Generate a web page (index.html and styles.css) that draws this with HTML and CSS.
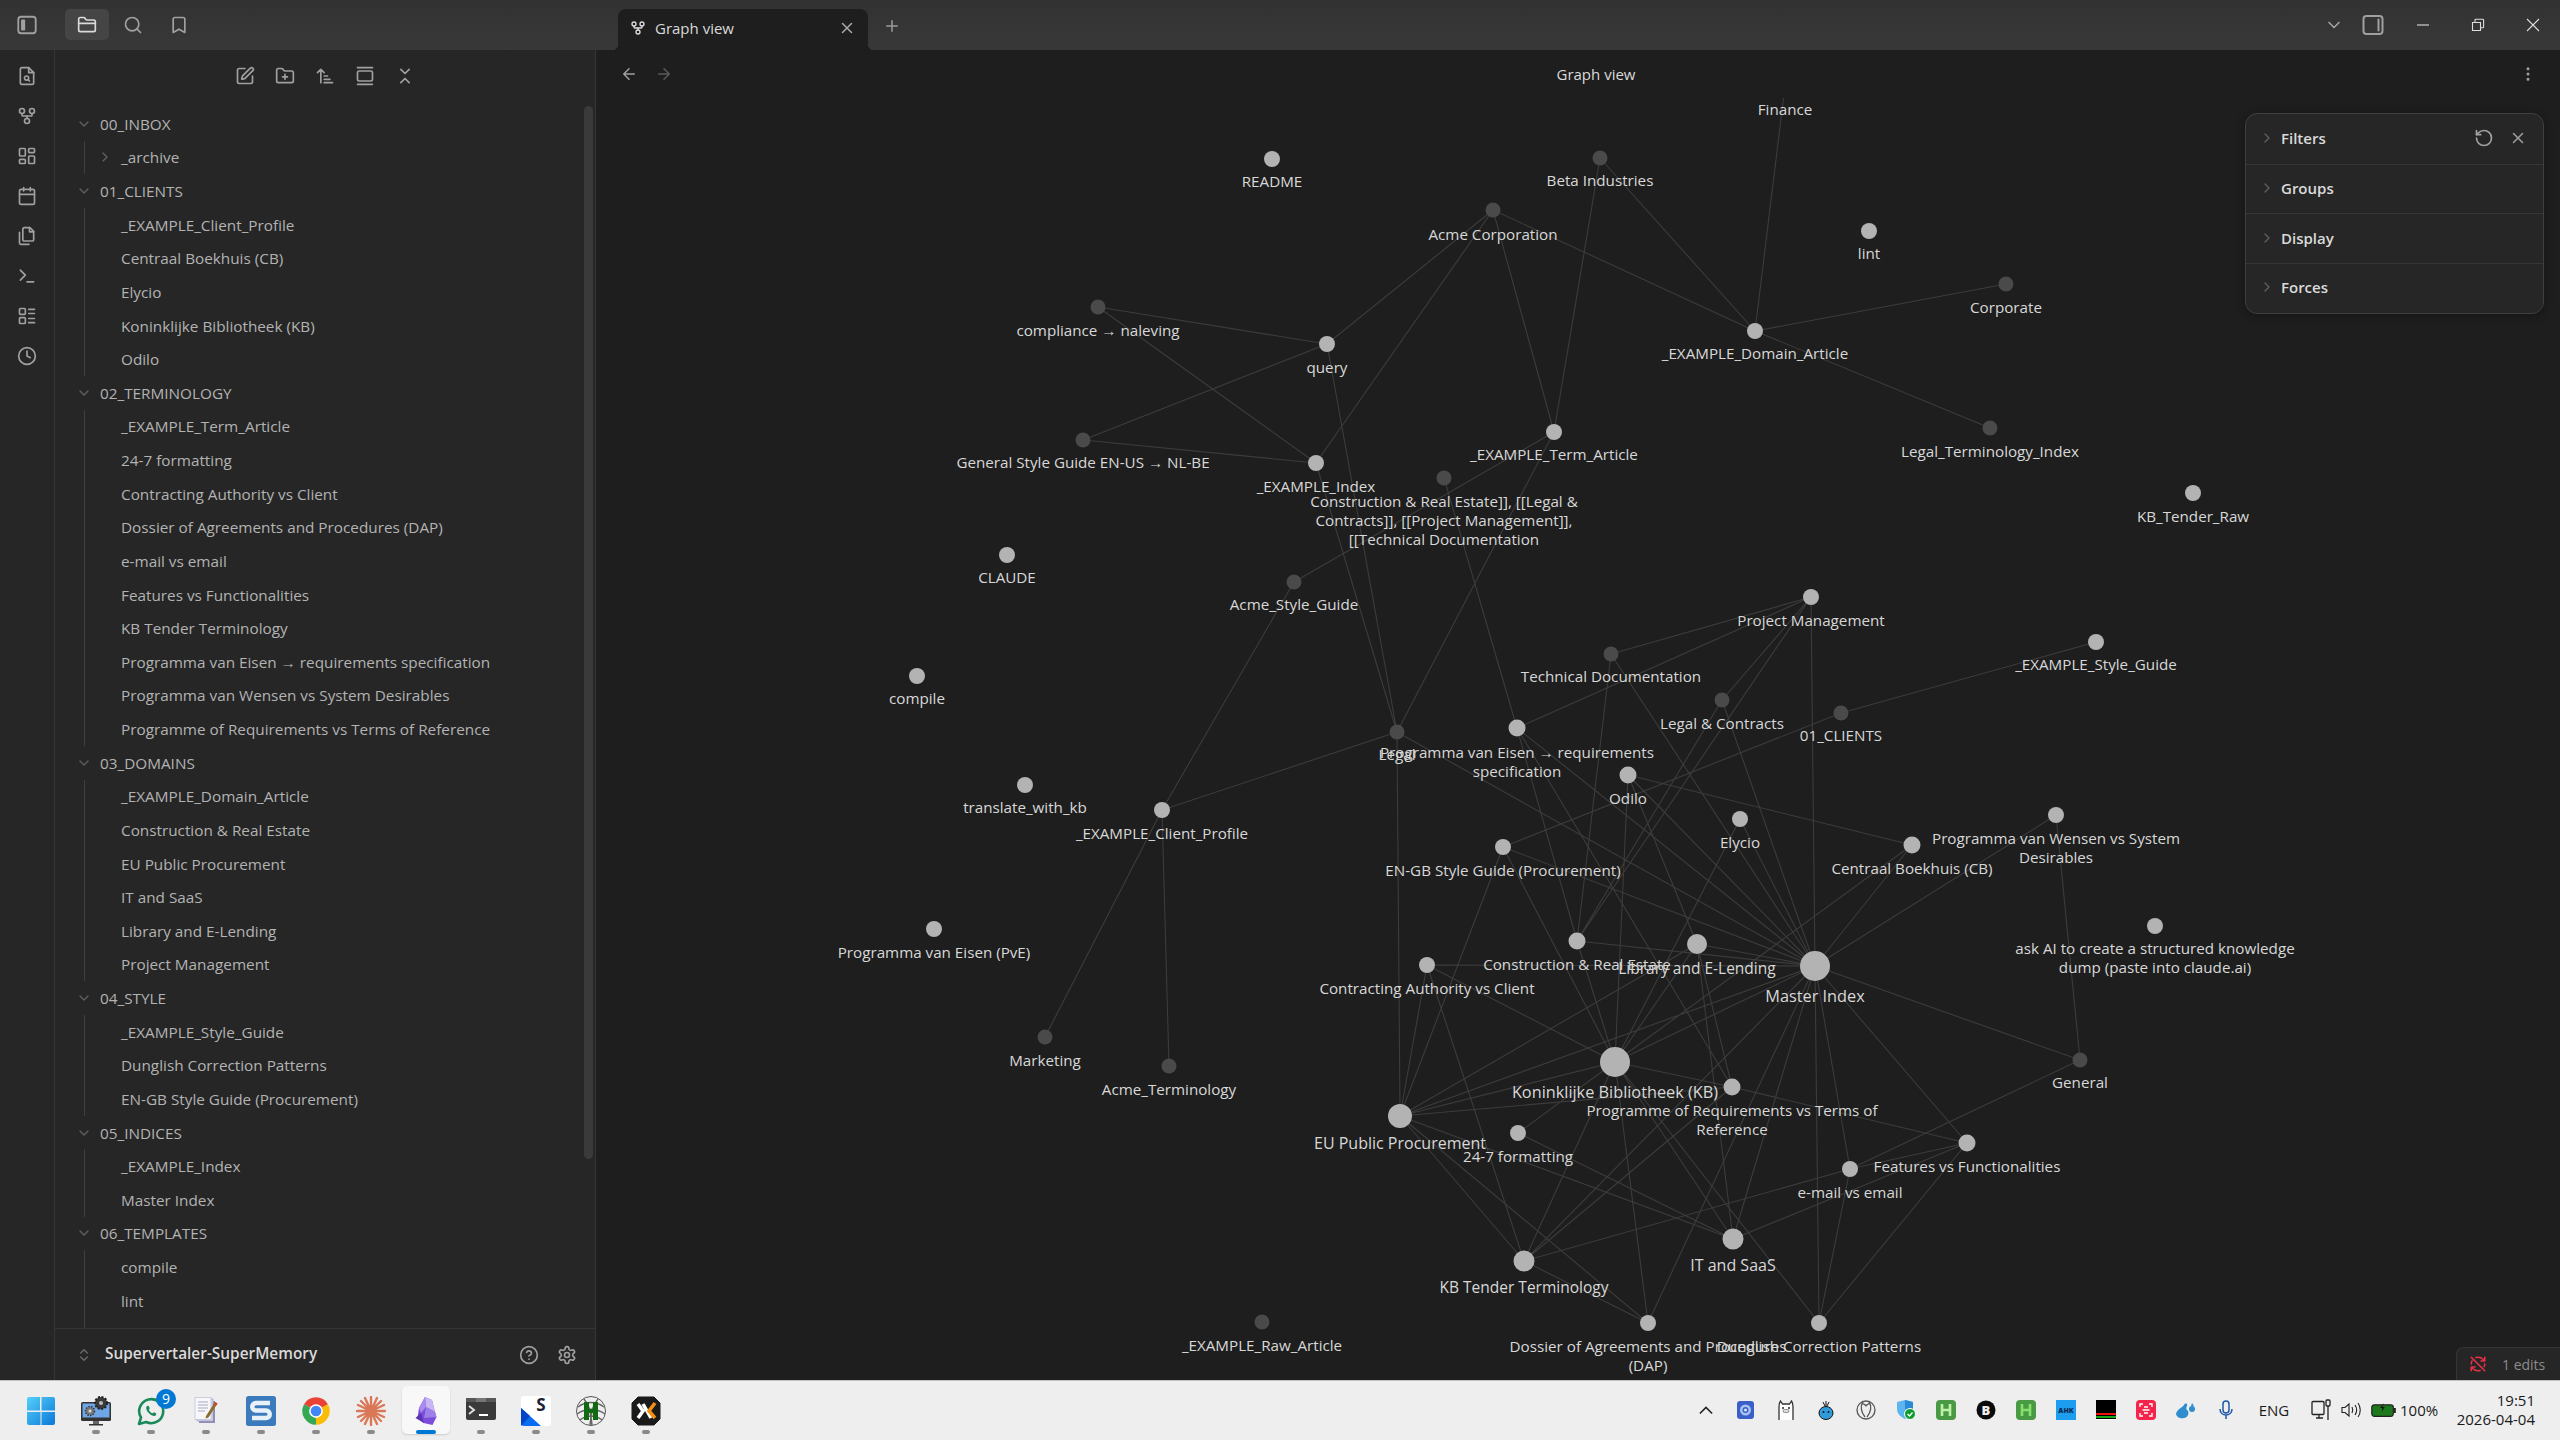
FILE: index.html
```html
<!DOCTYPE html>
<html lang="en">
<head>
<meta charset="utf-8">
<title>Graph view - Obsidian</title>
<link rel="stylesheet" href="styles.css">
</head>
<body>
<svg class="sprite" xmlns="http://www.w3.org/2000/svg">
  <symbol id="i-sidebar-left" viewBox="0 0 24 24"><rect x="2.5" y="3" width="19" height="18" rx="3"/><rect x="5.5" y="6" width="4.5" height="12" rx="1" class="fillc"/></symbol>
  <symbol id="i-sidebar-right" viewBox="0 0 24 24"><rect x="2.5" y="3" width="19" height="18" rx="3"/><path d="M17.5 6.5v11"/></symbol>
  <symbol id="i-folder" viewBox="0 0 24 24"><path d="M20 20a2 2 0 0 0 2-2V8a2 2 0 0 0-2-2h-7.9a2 2 0 0 1-1.69-.9L9.6 3.9A2 2 0 0 0 7.93 3H4a2 2 0 0 0-2 2v13a2 2 0 0 0 2 2Z"/><path d="M2 10h20"/></symbol>
  <symbol id="i-search" viewBox="0 0 24 24"><circle cx="11" cy="11" r="8"/><path d="m21 21-4.3-4.3"/></symbol>
  <symbol id="i-bookmark" viewBox="0 0 24 24"><path d="m19 21-7-4-7 4V5a2 2 0 0 1 2-2h10a2 2 0 0 1 2 2v16z"/></symbol>
  <symbol id="i-file-search" viewBox="0 0 24 24"><path d="M14 2H6a2 2 0 0 0-2 2v16a2 2 0 0 0 2 2h12a2 2 0 0 0 2-2V8z"/><path d="M14 2v6h6"/><circle cx="11.5" cy="14.5" r="2.5"/><path d="M13.3 16.3 15 18"/></symbol>
  <symbol id="i-graph" viewBox="0 0 24 24"><circle cx="12" cy="18" r="3"/><circle cx="6" cy="6" r="3"/><circle cx="18" cy="6" r="3"/><path d="M18 9v2c0 .6-.4 1-1 1H7c-.6 0-1-.4-1-1V9"/><path d="M12 12v3"/></symbol>
  <symbol id="i-dashboard" viewBox="0 0 24 24"><rect x="3" y="3" width="7" height="9" rx="1"/><rect x="14" y="3" width="7" height="5" rx="1"/><rect x="14" y="12" width="7" height="9" rx="1"/><rect x="3" y="16" width="7" height="5" rx="1"/></symbol>
  <symbol id="i-calendar" viewBox="0 0 24 24"><rect x="3" y="4" width="18" height="18" rx="2"/><path d="M16 2v4M8 2v4M3 10h18"/></symbol>
  <symbol id="i-files" viewBox="0 0 24 24"><path d="M15.5 2H8.6c-.4 0-.8.2-1.1.5-.3.3-.5.7-.5 1.1v12.8c0 .4.2.8.5 1.1.3.3.7.5 1.1.5h9.8c.4 0 .8-.2 1.1-.5.3-.3.5-.7.5-1.1V6.5L15.5 2z"/><path d="M3 7.6v12.8c0 .4.2.8.5 1.1.3.3.7.5 1.1.5h9.8"/><path d="M15 2v5h5"/></symbol>
  <symbol id="i-terminal" viewBox="0 0 24 24"><path d="m4 17 6-6-6-6"/><path d="M12 19h8"/></symbol>
  <symbol id="i-list" viewBox="0 0 24 24"><rect x="3" y="3" width="7" height="7" rx="1"/><rect x="3" y="14" width="7" height="7" rx="1"/><path d="M14 4h7M14 9h7M14 15h7M14 20h7"/></symbol>
  <symbol id="i-clock" viewBox="0 0 24 24"><circle cx="12" cy="12" r="10"/><path d="M12 6v6l4 2"/></symbol>
  <symbol id="i-edit" viewBox="0 0 24 24"><path d="M12 3H5a2 2 0 0 0-2 2v14a2 2 0 0 0 2 2h14a2 2 0 0 0 2-2v-7"/><path d="M18.375 2.625a1 1 0 0 1 3 3l-9.013 9.014a2 2 0 0 1-.853.505l-2.873.84a.5.5 0 0 1-.62-.62l.84-2.873a2 2 0 0 1 .506-.852z"/></symbol>
  <symbol id="i-folder-plus" viewBox="0 0 24 24"><path d="M12 10v6M9 13h6"/><path d="M20 20a2 2 0 0 0 2-2V8a2 2 0 0 0-2-2h-7.9a2 2 0 0 1-1.69-.9L9.6 3.9A2 2 0 0 0 7.93 3H4a2 2 0 0 0-2 2v13a2 2 0 0 0 2 2Z"/></symbol>
  <symbol id="i-sort" viewBox="0 0 24 24"><path d="m3 8 4-4 4 4M7 4v16M11 12h4M11 16h7M11 20h10"/></symbol>
  <symbol id="i-gallery" viewBox="0 0 24 24"><path d="M3 2h18M3 22h18"/><rect x="3" y="6" width="18" height="12" rx="2"/></symbol>
  <symbol id="i-collapse" viewBox="0 0 24 24"><path d="m7 20 5-5 5 5M7 4l5 5 5-5"/></symbol>
  <symbol id="i-down" viewBox="0 0 24 24"><path d="m6 9 6 6 6-6"/></symbol>
  <symbol id="i-right" viewBox="0 0 24 24"><path d="m9 18 6-6-6-6"/></symbol>
  <symbol id="i-updown" viewBox="0 0 24 24"><path d="m7 15 5 5 5-5M7 9l5-5 5 5"/></symbol>
  <symbol id="i-help" viewBox="0 0 24 24"><circle cx="12" cy="12" r="10"/><path d="M9.09 9a3 3 0 0 1 5.83 1c0 2-3 3-3 3M12 17h.01"/></symbol>
  <symbol id="i-gear" viewBox="0 0 24 24"><path d="M12.22 2h-.44a2 2 0 0 0-2 2v.18a2 2 0 0 1-1 1.73l-.43.25a2 2 0 0 1-2 0l-.15-.08a2 2 0 0 0-2.73.73l-.22.38a2 2 0 0 0 .73 2.73l.15.1a2 2 0 0 1 1 1.72v.51a2 2 0 0 1-1 1.74l-.15.09a2 2 0 0 0-.73 2.73l.22.38a2 2 0 0 0 2.73.73l.15-.08a2 2 0 0 1 2 0l.43.25a2 2 0 0 1 1 1.73V20a2 2 0 0 0 2 2h.44a2 2 0 0 0 2-2v-.18a2 2 0 0 1 1-1.73l.43-.25a2 2 0 0 1 2 0l.15.08a2 2 0 0 0 2.73-.73l.22-.39a2 2 0 0 0-.73-2.73l-.15-.08a2 2 0 0 1-1-1.74v-.5a2 2 0 0 1 1-1.74l.15-.09a2 2 0 0 0 .73-2.73l-.22-.38a2 2 0 0 0-2.73-.73l-.15.08a2 2 0 0 1-2 0l-.43-.25a2 2 0 0 1-1-1.73V4a2 2 0 0 0-2-2z"/><circle cx="12" cy="12" r="3"/></symbol>
  <symbol id="i-left-arrow" viewBox="0 0 24 24"><path d="m12 19-7-7 7-7M19 12H5"/></symbol>
  <symbol id="i-right-arrow" viewBox="0 0 24 24"><path d="M5 12h14M12 5l7 7-7 7"/></symbol>
  <symbol id="i-x" viewBox="0 0 24 24"><path d="M18 6 6 18M6 6l12 12"/></symbol>
  <symbol id="i-plus" viewBox="0 0 24 24"><path d="M5 12h14M12 5v14"/></symbol>
  <symbol id="i-more" viewBox="0 0 24 24"><circle cx="12" cy="12" r="1"/><circle cx="12" cy="5" r="1"/><circle cx="12" cy="19" r="1"/></symbol>
  <symbol id="i-reset" viewBox="0 0 24 24"><path d="M3 12a9 9 0 1 0 9-9 9.75 9.75 0 0 0-6.74 2.74L3 8"/><path d="M3 3v5h5"/></symbol>
  <symbol id="i-sync-off" viewBox="0 0 24 24"><path d="M3 3l18 18M21 8l-2.26-2.26A9.75 9.75 0 0 0 12 3c-1 0-1.97.15-2.88.43M21 3v5h-5M3 16l2.26 2.26A9.75 9.75 0 0 0 12 21c1 0 1.97-.15 2.88-.43M3 21v-5h5M21 12c0 1.3-.3 2.6-.8 3.7M3 12c0-1.6.4-3.1 1.2-4.4"/></symbol>
</svg>

<div class="app">
  <header class="titlebar">
    <div class="title-left">
      <span class="tb-toggle"><svg class="ic ic-22"><use href="#i-sidebar-left"/></svg></span>
      <span class="tb-btn active"><svg class="ic ic-20 strong"><use href="#i-folder"/></svg></span>
      <span class="tb-btn"><svg class="ic ic-20"><use href="#i-search"/></svg></span>
      <span class="tb-btn"><svg class="ic ic-20"><use href="#i-bookmark"/></svg></span>
    </div>
    <div class="tab">
      <svg class="ic ic-16 strong"><use href="#i-graph"/></svg>
      <span class="tab-title">Graph view</span>
      <svg class="ic ic-16 tab-close"><use href="#i-x"/></svg>
    </div>
    <span class="tab-new"><svg class="ic ic-18"><use href="#i-plus"/></svg></span>
    <div class="title-right">
      <span class="tr-btn w-39"><svg class="ic ic-20"><use href="#i-down"/></svg></span>
      <span class="tr-btn w-39 gap-after"><svg class="ic ic-24"><use href="#i-sidebar-right"/></svg></span>
      <span class="tr-btn w-55"><svg class="win-ic" viewBox="0 0 14 14"><path d="M1 7h12"/></svg></span>
      <span class="tr-btn w-55"><svg class="win-ic" viewBox="0 0 14 14"><path d="M1.500 4.500h8v8h-8zM4 4.500V2a.8.8 0 0 1 .8-.8h7a.8.8 0 0 1 .8.8v7a.8.8 0 0 1-.8.8H9.500"/></svg></span>
      <span class="tr-btn w-55"><svg class="win-ic" viewBox="0 0 14 14"><path d="M1 1l12 12M13 1 1 13"/></svg></span>
    </div>
  </header>

  <div class="body">
    <nav class="rail">
      <svg class="ic ic-20"><use href="#i-file-search"/></svg>
      <svg class="ic ic-20"><use href="#i-graph"/></svg>
      <svg class="ic ic-20"><use href="#i-dashboard"/></svg>
      <svg class="ic ic-20"><use href="#i-calendar"/></svg>
      <svg class="ic ic-20"><use href="#i-files"/></svg>
      <svg class="ic ic-20"><use href="#i-terminal"/></svg>
      <svg class="ic ic-20"><use href="#i-list"/></svg>
      <svg class="ic ic-20"><use href="#i-clock"/></svg>
    </nav>

    <aside class="panel">
      <div class="nav-tools">
        <svg class="ic ic-20"><use href="#i-edit"/></svg>
        <svg class="ic ic-20"><use href="#i-folder-plus"/></svg>
        <svg class="ic ic-20"><use href="#i-sort"/></svg>
        <svg class="ic ic-20"><use href="#i-gallery"/></svg>
        <svg class="ic ic-20"><use href="#i-collapse"/></svg>
      </div>
      <div class="tree">
        <div class="row folder"><svg class="ic chev"><use href="#i-down"/></svg>00_INBOX</div>
        <div class="children">
          <div class="row sub"><svg class="ic chev"><use href="#i-right"/></svg>_archive</div>
        </div>
        <div class="row folder"><svg class="ic chev"><use href="#i-down"/></svg>01_CLIENTS</div>
        <div class="children">
          <div class="row">_EXAMPLE_Client_Profile</div>
          <div class="row">Centraal Boekhuis (CB)</div>
          <div class="row">Elycio</div>
          <div class="row">Koninklijke Bibliotheek (KB)</div>
          <div class="row">Odilo</div>
        </div>
        <div class="row folder"><svg class="ic chev"><use href="#i-down"/></svg>02_TERMINOLOGY</div>
        <div class="children">
          <div class="row">_EXAMPLE_Term_Article</div>
          <div class="row">24-7 formatting</div>
          <div class="row">Contracting Authority vs Client</div>
          <div class="row">Dossier of Agreements and Procedures (DAP)</div>
          <div class="row">e-mail vs email</div>
          <div class="row">Features vs Functionalities</div>
          <div class="row">KB Tender Terminology</div>
          <div class="row">Programma van Eisen → requirements specification</div>
          <div class="row">Programma van Wensen vs System Desirables</div>
          <div class="row">Programme of Requirements vs Terms of Reference</div>
        </div>
        <div class="row folder"><svg class="ic chev"><use href="#i-down"/></svg>03_DOMAINS</div>
        <div class="children">
          <div class="row">_EXAMPLE_Domain_Article</div>
          <div class="row">Construction &amp; Real Estate</div>
          <div class="row">EU Public Procurement</div>
          <div class="row">IT and SaaS</div>
          <div class="row">Library and E-Lending</div>
          <div class="row">Project Management</div>
        </div>
        <div class="row folder"><svg class="ic chev"><use href="#i-down"/></svg>04_STYLE</div>
        <div class="children">
          <div class="row">_EXAMPLE_Style_Guide</div>
          <div class="row">Dunglish Correction Patterns</div>
          <div class="row">EN-GB Style Guide (Procurement)</div>
        </div>
        <div class="row folder"><svg class="ic chev"><use href="#i-down"/></svg>05_INDICES</div>
        <div class="children">
          <div class="row">_EXAMPLE_Index</div>
          <div class="row">Master Index</div>
        </div>
        <div class="row folder"><svg class="ic chev"><use href="#i-down"/></svg>06_TEMPLATES</div>
        <div class="children">
          <div class="row">compile</div>
          <div class="row">lint</div>
          <div class="row"></div>
        </div>
      </div>
      <div class="scroll-thumb"></div>
      <div class="vault">
        <svg class="ic vault-chev"><use href="#i-updown"/></svg>
        <span class="vault-name">Supervertaler-SuperMemory</span>
        <svg class="ic ic-20 vault-help"><use href="#i-help"/></svg>
        <svg class="ic ic-20 vault-gear"><use href="#i-gear"/></svg>
      </div>
    </aside>

    <main class="workspace">
      <div class="view-header">
        <svg class="ic ic-18 back"><use href="#i-left-arrow"/></svg>
        <svg class="ic ic-18 forward"><use href="#i-right-arrow"/></svg>
        <span class="view-title">Graph view</span>
        <svg class="ic ic-18 view-more"><use href="#i-more"/></svg>
      </div>

      <svg class="graph" viewBox="596 50 1964 1330" xmlns="http://www.w3.org/2000/svg">
        <path class="edges" d="M1785 86L1755 331M1600 158L1755 331M1600 158L1554 432M1493 210L1755 331M1493 210L1327 344M1493 210L1316 463M1493 210L1554 432M1098 307L1327 344M1098 307L1316 463M1327 344L1083 440M1083 440L1316 463M1327 344L1397 732M1316 463L1397 732M1755 331L2006 284M1755 331L1990 428M1554 432L1294 582M1554 432L1397 732M1444 478L1517 728M1294 582L1162 810M1397 732L1162 810M1162 810L1045 1037M1162 810L1169 1066M1397 732L1400 1116M1397 732L1815 966M1811 597L1611 654M1811 597L1517 728M1811 597L1815 966M1811 597L1722 700M1811 597L1577 941M1611 654L1577 941M1611 654L1815 966M1722 700L1577 941M1722 700L1815 966M1841 713L2096 642M1841 713L1503 847M1517 728L1577 941M1517 728L1815 966M1517 728L1732 1087M1628 775L1912 845M1628 775L1615 1062M1628 775L1815 966M1628 775L1697 944M1740 819L1615 1062M1740 819L1815 966M1912 845L1815 966M1912 845L1615 1062M2056 815L1815 966M2056 815L2080 1060M1503 847L1815 966M1503 847L1615 1062M1503 847L1400 1116M1577 941L1815 966M1697 944L1815 966M1577 941L1615 1062M1427 965L1815 966M1427 965L1400 1116M1427 965L1615 1062M1427 965L1524 1261M1697 944L1615 1062M1697 944L1732 1087M1697 944L1400 1116M1697 944L1733 1239M1815 966L1400 1116M1815 966L1615 1062M1815 966L2080 1060M1815 966L1967 1143M1815 966L1524 1261M1815 966L1733 1239M1815 966L1819 1323M1815 966L1850 1169M1815 966L1648 1323M1615 1062L1400 1116M1732 1087L1400 1116M1615 1062L1732 1087M1615 1062L1518 1133M1615 1062L1733 1239M1615 1062L1819 1323M1615 1062L1648 1323M1615 1062L1524 1261M1732 1087L1967 1143M1732 1087L1524 1261M1400 1116L1524 1261M1400 1116L1648 1323M1518 1133L1733 1239M1400 1116L1733 1239M2080 1060L1850 1169M1967 1143L1733 1239M1967 1143L1850 1169M1967 1143L1819 1323M1850 1169L1524 1261M1850 1169L1819 1323M1524 1261L1648 1323"/>
        <g class="nodes">
          <circle cx="1272" cy="159" r="8"/><circle cx="1869" cy="231" r="8"/><circle cx="1327" cy="344" r="8"/><circle cx="1755" cy="331" r="8"/><circle cx="1554" cy="432" r="8"/><circle cx="1316" cy="463" r="8"/><circle cx="2193" cy="493" r="8"/><circle cx="1007" cy="555" r="8"/><circle cx="1811" cy="597" r="8"/><circle cx="2096" cy="642" r="8"/><circle cx="917" cy="676" r="8"/><circle cx="1517" cy="728" r="8.500"/><circle cx="1628" cy="775" r="8.500"/><circle cx="1025" cy="785" r="8"/><circle cx="1162" cy="810" r="8"/><circle cx="1740" cy="819" r="8"/><circle cx="2056" cy="815" r="8"/><circle cx="1912" cy="845" r="8.500"/><circle cx="1503" cy="847" r="8"/><circle cx="2155" cy="926" r="8"/><circle cx="934" cy="929" r="8"/><circle cx="1577" cy="941" r="8.500"/><circle cx="1697" cy="944" r="10"/><circle cx="1427" cy="965" r="8"/><circle cx="1815" cy="966" r="15"/><circle cx="1615" cy="1062" r="15"/><circle cx="1732" cy="1087" r="8.500"/><circle cx="1400" cy="1116" r="12"/><circle cx="1518" cy="1133" r="8"/><circle cx="1967" cy="1143" r="8.500"/><circle cx="1850" cy="1169" r="8"/><circle cx="1733" cy="1239" r="10.500"/><circle cx="1524" cy="1261" r="10.500"/><circle cx="1648" cy="1323" r="8"/><circle cx="1819" cy="1323" r="8"/>
        </g>
        <g class="nodes dim">
          <circle cx="1600" cy="158" r="7.500"/><circle cx="1493" cy="210" r="7.500"/><circle cx="2006" cy="284" r="7.500"/><circle cx="1098" cy="307" r="7.500"/><circle cx="1083" cy="440" r="7.500"/><circle cx="1990" cy="428" r="7.500"/><circle cx="1444" cy="478" r="7.500"/><circle cx="1294" cy="582" r="7.500"/><circle cx="1611" cy="654" r="7.500"/><circle cx="1722" cy="700" r="7.500"/><circle cx="1841" cy="713" r="7.500"/><circle cx="1397" cy="732" r="7.500"/><circle cx="1045" cy="1037" r="7.500"/><circle cx="1169" cy="1066" r="7.500"/><circle cx="2080" cy="1060" r="7.500"/><circle cx="1262" cy="1322" r="7.500"/>
        </g>
        <g class="labels" transform="translate(0 1)">
          <text x="1785" y="114">Finance</text>
          <text x="1272" y="186">README</text>
          <text x="1600" y="185">Beta Industries</text>
          <text x="1493" y="239">Acme Corporation</text>
          <text x="1869" y="258">lint</text>
          <text x="2006" y="312">Corporate</text>
          <text x="1098" y="335">compliance → naleving</text>
          <text x="1327" y="372">query</text>
          <text x="1755" y="358">_EXAMPLE_Domain_Article</text>
          <text x="1083" y="467">General Style Guide EN-US → NL-BE</text>
          <text x="1554" y="459">_EXAMPLE_Term_Article</text>
          <text x="1990" y="456">Legal_Terminology_Index</text>
          <text x="1316" y="491">_EXAMPLE_Index</text>
          <text y="506"><tspan x="1444">Construction &amp; Real Estate]], [[Legal &amp;</tspan><tspan x="1444" dy="19">Contracts]], [[Project Management]],</tspan><tspan x="1444" dy="19">[[Technical Documentation</tspan></text>
          <text x="2193" y="521">KB_Tender_Raw</text>
          <text x="1007" y="582">CLAUDE</text>
          <text x="1294" y="609">Acme_Style_Guide</text>
          <text x="1811" y="625">Project Management</text>
          <text x="2096" y="669">_EXAMPLE_Style_Guide</text>
          <text x="1611" y="681">Technical Documentation</text>
          <text x="917" y="703">compile</text>
          <text x="1722" y="728">Legal &amp; Contracts</text>
          <text x="1841" y="740">01_CLIENTS</text>
          <text x="1397" y="759">Legal</text>
          <text y="757"><tspan x="1517">Programma van Eisen → requirements</tspan><tspan x="1517" dy="19">specification</tspan></text>
          <text x="1628" y="803">Odilo</text>
          <text x="1025" y="812">translate_with_kb</text>
          <text x="1162" y="838">_EXAMPLE_Client_Profile</text>
          <text x="1740" y="847">Elycio</text>
          <text y="843"><tspan x="2056">Programma van Wensen vs System</tspan><tspan x="2056" dy="19">Desirables</tspan></text>
          <text x="1912" y="873">Centraal Boekhuis (CB)</text>
          <text x="1503" y="875">EN-GB Style Guide (Procurement)</text>
          <text y="953"><tspan x="2155">ask AI to create a structured knowledge</tspan><tspan x="2155" dy="19">dump (paste into claude.ai)</tspan></text>
          <text x="934" y="957">Programma van Eisen (PvE)</text>
          <text x="1577" y="969">Construction &amp; Real Estate</text>
          <text class="size-m" x="1697" y="973">Library and E-Lending</text>
          <text x="1427" y="993">Contracting Authority vs Client</text>
          <text class="size-xl" x="1815" y="1001">Master Index</text>
          <text x="1045" y="1065">Marketing</text>
          <text x="1169" y="1094">Acme_Terminology</text>
          <text class="size-xl" x="1615" y="1097">Koninklijke Bibliotheek (KB)</text>
          <text y="1115"><tspan x="1732">Programme of Requirements vs Terms of</tspan><tspan x="1732" dy="19">Reference</tspan></text>
          <text x="2080" y="1087">General</text>
          <text class="size-l" x="1400" y="1148">EU Public Procurement</text>
          <text x="1518" y="1161">24-7 formatting</text>
          <text x="1967" y="1171">Features vs Functionalities</text>
          <text x="1850" y="1197">e-mail vs email</text>
          <text class="size-l" x="1733" y="1270">IT and SaaS</text>
          <text class="size-m" x="1524" y="1292">KB Tender Terminology</text>
          <text x="1262" y="1350">_EXAMPLE_Raw_Article</text>
          <text y="1351"><tspan x="1648">Dossier of Agreements and Procedures</tspan><tspan x="1648" dy="19">(DAP)</tspan></text>
          <text x="1819" y="1351">Dunglish Correction Patterns</text>
        </g>
      </svg>

      <section class="controls">
        <div class="control">
          <svg class="ic ctl-chev"><use href="#i-right"/></svg><span class="ctl-label">Filters</span>
          <svg class="ic ic-20 ctl-reset"><use href="#i-reset"/></svg>
          <svg class="ic ic-18 ctl-x"><use href="#i-x"/></svg>
        </div>
        <div class="control"><svg class="ic ctl-chev"><use href="#i-right"/></svg><span class="ctl-label">Groups</span></div>
        <div class="control"><svg class="ic ctl-chev"><use href="#i-right"/></svg><span class="ctl-label">Display</span></div>
        <div class="control"><svg class="ic ctl-chev"><use href="#i-right"/></svg><span class="ctl-label">Forces</span></div>
      </section>

      <div class="status"><svg class="ic sync-off"><use href="#i-sync-off"/></svg><span>1 edits</span></div>
    </main>
  </div>
</div>

<footer class="taskbar">
  <div class="apps">
    <span class="tapp none"><svg viewBox="0 0 30 30"><defs><linearGradient id="w1" x1="0" y1="0" x2="1" y2="1"><stop offset="0" stop-color="#55d0fb"/><stop offset="1" stop-color="#0a78d6"/></linearGradient></defs><path fill="url(#w1)" d="M1 3a2 2 0 0 1 2-2h11v13.500H1zM15.500 1H27a2 2 0 0 1 2 2v11.500H15.500zM1 16h13.500v13H3a2 2 0 0 1-2-2zM15.500 16H29v11a2 2 0 0 1-2 2H15.500z"/></svg></span>
    <span class="tapp"><svg viewBox="0 0 30 30"><rect x="0" y="6" width="30" height="19" rx="1.500" fill="#333"/><rect x="1.500" y="7.500" width="27" height="14" fill="#6fa6e6"/><rect x="12" y="25" width="6" height="3" fill="#666"/><rect x="8" y="28" width="14" height="1.500" fill="#333"/><circle cx="20" cy="7" r="6" fill="#3b3b3b"/><circle cx="20" cy="7" r="6" fill="none" stroke="#222" stroke-width="2" stroke-dasharray="2 1.500"/><circle cx="20" cy="7" r="2" fill="#bbb"/><circle cx="9" cy="15" r="4" fill="#777"/><circle cx="9" cy="15" r="4.500" fill="none" stroke="#333" stroke-width="1.500" stroke-dasharray="1.500 1.200"/><circle cx="9" cy="15" r="1.500" fill="#ddd"/></svg></span>
    <span class="tapp"><svg class="wa" viewBox="0 0 30 30"><path d="M3 28l2-6.500A12 12 0 1 1 10 26z" fill="none" stroke="#1b8a5a" stroke-width="2.600" stroke-linejoin="round"/><path d="M10.500 10.500c1-1 2-1 2.500 0l.8 1.800-1 1.400c.8 1.700 2 2.800 3.700 3.600l1.500-1.100 1.900 1c.7.600.5 1.700-.6 2.500-2.500 1.600-10-4-9-8.500z" fill="#1b8a5a"/></svg><b class="badge">9</b></span>
    <span class="tapp"><svg viewBox="0 0 30 30"><rect x="8" y="5" width="16" height="22" fill="#8f8fb5"/><rect x="6" y="3" width="16" height="22" fill="#d7d7ec" stroke="#9a9ac0" stroke-width=".6"/><rect x="4" y="1.500" width="16" height="22" fill="#f6f6fb" stroke="#b5b5cf" stroke-width=".6"/><path d="M7 6h10M7 9h10M7 12h10M7 15h7" stroke="#a9a9c4"/><path d="M15 20l9-14 2.500 1.500-9 14-3 1z" fill="#8a6d2f"/><path d="M22.500 8.500l1.500-2.500 2.500 1.500-1.500 2.500z" fill="#d3462f"/></svg></span>
    <span class="tapp"><svg viewBox="0 0 30 30"><rect width="30" height="30" rx="2.500" fill="#3b7bbd"/><path d="M24 7H10a3.500 3.500 0 0 0 0 7.500h10a3.500 3.500 0 0 1 0 7.500H6" fill="none" stroke="#e8f1fa" stroke-width="4.500"/></svg></span>
    <span class="tapp"><svg viewBox="0 0 48 48"><path fill="#ea4335" d="M24 24L4.950 13A22 22 0 0 1 43.050 13Z"/><path fill="#fbbc04" d="M24 24L43.050 13A22 22 0 0 1 24 46Z"/><path fill="#34a853" d="M24 24L24 46A22 22 0 0 1 4.950 13Z"/><circle cx="24" cy="24" r="11" fill="#fff"/><circle cx="24" cy="24" r="8.500" fill="#4285f4"/></svg></span>
    <span class="tapp"><svg class="claude" viewBox="0 0 30 30"><path d="M15 1v28M1 15h28M5 5l20 20M25 5 5 25M9 2l12 26M21 2 9 28M2 9l26 12M28 9 2 21"/></svg></span>
    <span class="tapp active"><svg viewBox="0 0 30 30"><path fill="#7c4ddb" d="M8 12 14 1l7 3 3 12 1.500 5-4 8-9-2-6-5z"/><path fill="#c9b6f5" d="M14 1l7 3 3 12-9-5z"/><path fill="#a78bf0" d="M14 1 8 12l2 5 5-6z"/><path fill="#5b33b5" d="M4.500 22 10 17l3 10z"/><path fill="#9d7fe8" d="M15 11l9 5 1.500 5-12.500 1z"/></svg></span>
    <span class="tapp"><svg viewBox="0 0 30 30"><rect y="2" width="30" height="22" rx="2" fill="#3a3a3a"/><rect y="2" width="30" height="4" fill="#585858"/><rect x="10" y="2" width="10" height="4" fill="#767676"/><path d="M3 10l5 4-5 4" fill="none" stroke="#ddd" stroke-width="2"/><path d="M13 19h9" stroke="#fff" stroke-width="2"/></svg></span>
    <span class="tapp"><svg viewBox="0 0 30 30"><rect width="30" height="30" rx="3" fill="#fff"/><path d="M0 12 20 30H3a3 3 0 0 1-3-3z" fill="#0a6cf0"/><path d="M0 12 9 20 0 30z" fill="#0044c8"/><text x="20" y="15" class="s-letter">S</text></svg></span>
    <span class="tapp"><svg viewBox="0 0 30 30"><circle cx="15" cy="15" r="14.500" fill="#eee" stroke="#555"/><path d="M2 11c8-6 18-6 26 0M1 18c9-6 19-6 28 0M4 24c7-5 15-5 22 0M8 3c6 7 8 17 6 26M22 3c-6 7-8 17-6 26" fill="none" stroke="#666" stroke-width="1.500"/><path d="M8 6h5v7h4V6h5v18h-5v-7h-4v7H8z" fill="#0f6a12"/></svg></span>
    <span class="tapp"><svg viewBox="0 0 30 30"><path d="M7 1h16l6 6v16l-6 6H7l-6-6V7z" fill="#1a1a1a" stroke="#1a1a1a" stroke-linejoin="round"/><path d="M7 8l5 7-5 7M12 8l8 14" fill="none" stroke="#fff" stroke-width="3.500"/><path d="M24 7l-6 8 6 7" fill="none" stroke="#f29111" stroke-width="3.500"/></svg></span>
  </div>
  <div class="tray">
    <span class="ti"><svg class="tray-chev" viewBox="0 0 16 10"><path d="M1 8.500 8 1.500l7 7"/></svg></span>
    <span class="ti"><svg viewBox="0 0 20 20"><rect x="1" y="1" width="17" height="18" rx="3" fill="#3a5fc8"/><circle cx="9.500" cy="10" r="5.500" fill="#a9c4f2"/><circle cx="9.500" cy="10" r="3" fill="#3a5fc8"/><circle cx="9.500" cy="10" r="1.500" fill="#dbe7fb"/></svg></span>
    <span class="ti"><svg viewBox="0 0 20 20"><path d="M3 20V7C3 6 3 3 4.500 1L6.500 4h7l2-3C17 3 17 6 17 7v13" fill="#fff" stroke="#333" stroke-width="1.300"/><circle cx="7" cy="8" r="1" fill="#222"/><circle cx="13" cy="8" r="1" fill="#222"/><rect x="7" y="9.500" width="6" height="3" rx="1.500" fill="#ddd" stroke="#555" stroke-width=".6"/></svg></span>
    <span class="ti"><svg viewBox="0 0 20 20"><path d="M10 7V1M7 2l2 4M13 2l-2 4" stroke="#111" fill="none"/><ellipse cx="10" cy="13" rx="7" ry="6.500" fill="#2f9bd8" stroke="#111"/><circle cx="7.500" cy="12" r="1" fill="#111"/><circle cx="12.500" cy="12" r="1" fill="#111"/></svg></span>
    <span class="ti"><svg viewBox="0 0 20 20" fill="none" stroke="#555" stroke-width="1.300"><circle cx="10" cy="10" r="9"/><path d="M7 2c-3 4-2 10 2 15M13 2c3 4 2 10-2 15M6 3l5 3M14 3 9 6"/></svg></span>
    <span class="ti"><svg viewBox="0 0 20 20"><path d="M1 2 9 0l8 2v7c0 5-4 8-8 10-4-2-8-5-8-10z" fill="#5cb4f0"/><path d="M9 0l8 2v7H9z" fill="#2b8ad8"/><circle cx="14" cy="14" r="5.500" fill="#0e9a2c" stroke="#fff"/><path d="M11.500 14l2 2 3-3.500" fill="none" stroke="#fff" stroke-width="1.300"/></svg></span>
    <span class="ti"><svg viewBox="0 0 20 20"><rect width="20" height="20" rx="4" fill="#4a9a45"/><path d="M6 4v12M14 4v12M6 10h8" stroke="#bdf0a8" stroke-width="2.600"/></svg></span>
    <span class="ti"><svg viewBox="0 0 20 20"><circle cx="10" cy="10" r="9.500" fill="#0b0b0b"/><text x="10" y="14.500" class="b-letter">B</text></svg></span>
    <span class="ti"><svg viewBox="0 0 20 20"><rect width="20" height="20" rx="4" fill="#4a9a45"/><path d="M6 4v12M14 4v12M6 10h8" stroke="#85e06c" stroke-width="2.600"/></svg></span>
    <span class="ti"><svg viewBox="0 0 20 20"><rect width="20" height="20" fill="#1c9df0"/><text x="10" y="13" class="ahk">AHK</text></svg></span>
    <span class="ti"><svg viewBox="0 0 20 20"><rect width="20" height="20" fill="#000"/><path d="M0 14h20" stroke="#f01010" stroke-width="2"/><path d="M0 17h20" stroke="#1aa51a" stroke-width="2"/><path d="M0 19.500h20" stroke="#fff"/></svg></span>
    <span class="ti"><svg viewBox="0 0 20 20"><rect width="20" height="20" rx="4" fill="#f4244a"/><path d="M7 4H4v3M13 4h3v3M7 16H4v-3M13 16h3v-3M6.500 10h7M8 7h4M8 13h4" fill="none" stroke="#fff" stroke-width="1.400"/></svg></span>
    <span class="ti"><svg viewBox="0 0 20 20"><path d="M0 14C1 9 6 8 8 5c1-2 4-2 3 1-1 2-1 3 0 4 3 2 1 8-3 8-3 1-7 0-8-4z" fill="#2e8dcf"/><circle cx="16" cy="9" r="3" fill="#2e8dcf"/><path d="M16 3l2 3-3 0z" fill="#2e8dcf"/></svg></span>
    <span class="ti"><svg viewBox="0 0 20 20" fill="none" stroke="#2058a8" stroke-width="1.500"><rect x="7" y="1" width="6" height="12" rx="3"/><path d="M4 9c0 4 3 6 6 6s6-2 6-6M10 15v4"/></svg></span>
    <span class="eng">ENG</span>
    <svg class="sys net" viewBox="0 0 20 22" fill="none" stroke="#222" stroke-width="1.300"><rect x="1" y="2.500" width="12" height="13" rx="1"/><path d="M5 19h7M8 16v3"/><rect x="15" y="1" width="4" height="6" rx="1" fill="#eee"/><path d="M17 7v14"/></svg>
    <svg class="sys spk" viewBox="0 0 20 20" fill="none" stroke="#222" stroke-width="1.100"><path d="M1 7.500h3L8 4v12l-4-3.500H1z"/><path d="M11 7c1 2 1 4 0 6M14 5c2 3 2 7 0 10M17 3c3 4 3 10 0 14"/></svg>
    <svg class="sys bat" viewBox="0 0 25 16"><rect x=".8" y="2.800" width="21.500" height="11.500" rx="2.500" fill="#1c7a1c" stroke="#222" stroke-width="1.200"/><rect x="22.800" y="6" width="2" height="5" fill="#222"/><path d="M13 1l-1.800 4h2.500l-3 5 .8-4H9z" fill="#111"/></svg>
    <span class="pct">100%</span>
    <div class="clock"><span>19:51</span><span>2026-04-04</span></div>
  </div>
</footer>
</body>
</html>
```

FILE: styles.css
```css
* { box-sizing: border-box; }
html, body { margin: 0; padding: 0; }
body {
  width: 2560px;
  height: 1440px;
  overflow: hidden;
  display: flex;
  flex-direction: column;
  background: #1e1e1e;
  font-family: "Open Sans", "Noto Sans", "Liberation Sans", sans-serif;
  font-size: 15px;
  color: #b3b3b3;
}
.sprite { display: none; }
.ic { fill: none; stroke: currentColor; stroke-width: 2; stroke-linecap: round; stroke-linejoin: round; flex: none; display: block; }
.fillc { fill: currentColor; stroke: none; }
.ic-16 { width: 16px; height: 16px; }
.ic-18 { width: 18px; height: 18px; }
.ic-20 { width: 20px; height: 20px; }
.ic-22 { width: 22px; height: 22px; }
.ic-24 { width: 24px; height: 24px; }
.strong { color: #dadada; }

.app { height: 1380px; display: flex; flex-direction: column; flex: none; }

.titlebar {
  height: 50px;
  flex: none;
  display: flex;
  align-items: stretch;
  background: linear-gradient(#323232, #383838);
  color: #a0a0a0;
}
.title-left { width: 618px; flex: none; display: flex; align-items: center; padding-left: 16px; padding-bottom: 1px; }
.tb-toggle { width: 49px; display: flex; }
.tb-btn { width: 44px; height: 31px; display: flex; align-items: center; justify-content: center; border-radius: 5px; margin-right: 2px; }
.tb-btn.active { background: #454545; }
.tab {
  width: 250px;
  margin-top: 9px;
  display: flex;
  align-items: center;
  padding: 0 12px 3px 12px;
  gap: 9px;
  background: #1e1e1e;
  border-radius: 8px 8px 0 0;
  position: relative;
  color: #dadada;
}
.tab::before, .tab::after {
  content: "";
  position: absolute;
  bottom: 0;
  width: 6px;
  height: 6px;
}
.tab::before { left: -6px; background: radial-gradient(circle at 0 0, transparent 6px, #1e1e1e 6.500px); }
.tab::after { right: -6px; background: radial-gradient(circle at 100% 0, transparent 6px, #1e1e1e 6.500px); }
.tab-title { flex: 1; font-size: 15px; }
.tab-close { color: #a8a8a8; width: 18px; height: 18px; }
.tab-new { width: 48px; display: flex; align-items: center; justify-content: center; padding-top: 2px; color: #9a9a9a; }
.title-right { margin-left: auto; display: flex; align-items: stretch; }
.tr-btn { display: flex; align-items: center; justify-content: center; }
.w-39 { width: 39px; }
.w-55 { width: 55px; }
.gap-after { margin-right: 3px; }
.win-ic { width: 14px; height: 14px; fill: none; stroke: #dcdcdc; stroke-width: 1.100; }

.body { flex: 1; display: flex; min-height: 0; }

.rail {
  width: 55px;
  flex: none;
  display: flex;
  flex-direction: column;
  align-items: center;
  gap: 20px;
  padding-top: 16px;
  background: #262626;
  border-right: 1px solid #363636;
  color: #a0a0a0;
}

.panel {
  width: 541px;
  flex: none;
  display: flex;
  flex-direction: column;
  background: #262626;
  border-right: 1px solid #363636;
  position: relative;
}
.nav-tools {
  height: 57px;
  flex: none;
  display: flex;
  justify-content: center;
  align-items: flex-start;
  gap: 20px;
  padding-top: 16px;
  color: #a0a0a0;
}
.tree { flex: 1; min-height: 0; overflow: hidden; }
.row { height: 33.630px; display: flex; align-items: center; white-space: nowrap; padding-left: 36px; font-size: 15.300px; }
.row.folder { padding-left: 21px; }
.row.sub { padding-left: 12px; }
.chev { width: 16px; height: 16px; margin-right: 8px; color: #5f5f5f; }
.children { margin-left: 29px; border-left: 1px solid #3f3f3f; }
.scroll-thumb { position: absolute; right: 2px; top: 56px; width: 9px; height: 1053px; border-radius: 5px; background: #3a3a3a; }
.vault {
  height: 52px;
  flex: none;
  display: flex;
  align-items: center;
  border-top: 1px solid #363636;
  padding-left: 21px;
  color: #a0a0a0;
}
.vault-chev { width: 16px; height: 16px; margin-right: 13px; color: #6a6a6a; }
.vault-name { flex: 1; font-weight: 600; color: #dadada; font-size: 15.400px; padding-bottom: 2px; }
.vault-help { margin-right: 18px; }
.vault-gear { margin-right: 18px; }

.workspace { flex: 1; position: relative; background: #1e1e1e; overflow: hidden; }
.view-header {
  height: 48px;
  display: flex;
  align-items: center;
  padding-left: 24px;
  background: #1e1e1e;
  position: relative;
  z-index: 2;
  color: #a0a0a0;
}
.forward { margin-left: 17px; color: #5a5a5a; }
.view-title { flex: 1; text-align: center; color: #dadada; font-size: 15px; }
.view-more { margin-right: 23px; }

.graph { position: absolute; left: 0; top: 0; width: 1964px; height: 1330px; }
.edges { fill: none; stroke: #3c3c3c; stroke-width: 1.100; }
.nodes circle { fill: #b3b3b3; }
.nodes.dim circle { fill: #4a4a4a; }
.labels text { fill: #d8d8d8; font-size: 15.200px; text-anchor: middle; }
.labels .size-m { font-size: 15.500px; }
.labels .size-l { font-size: 16px; }
.labels .size-xl { font-size: 16.300px; }

.controls {
  position: absolute;
  right: 16px;
  top: 63px;
  width: 299px;
  background: #262626;
  border: 1px solid #3f3f3f;
  border-radius: 12px;
  box-shadow: 0 2px 10px rgba(0, 0, 0, 0.35);
  z-index: 3;
}
.control {
  height: 49.700px;
  display: flex;
  align-items: center;
  padding: 0 0 2px 13px;
  color: #a0a0a0;
  border-top: 1px solid #363636;
}
.control:first-child { border-top: 0; }
.ctl-chev { width: 16px; height: 16px; margin-right: 6px; color: #5f5f5f; }
.ctl-label { flex: 1; color: #dadada; font-weight: 600; font-size: 15px; }
.ctl-reset { margin-right: 15px; }
.ctl-x { margin-right: 16px; }

.status {
  position: absolute;
  right: 0;
  bottom: 0;
  width: 104px;
  height: 33px;
  display: flex;
  align-items: center;
  gap: 15px;
  padding-left: 12px;
  background: #262626;
  border: 1px solid #363636;
  border-width: 1px 0 0 1px;
  border-radius: 8px 0 0 0;
  font-size: 14px;
  color: #8c8c8c;
  z-index: 3;
}
.sync-off { width: 18px; height: 18px; color: #e93147; }

.taskbar {
  height: 60px;
  flex: none;
  display: flex;
  align-items: center;
  padding: 0 25px 0 13px;
  background: #eeeeee;
  border-top: 1px solid #c2c2c2;
  color: #1a1a1a;
}
.apps { display: flex; align-items: center; height: 100%; }
.tapp { width: 55px; height: 59px; position: relative; display: flex; align-items: center; justify-content: center; }
.tapp > svg { width: 30px; height: 30px; position: relative; z-index: 1; }
.tapp::after {
  content: "";
  position: absolute;
  left: 50%;
  bottom: 6px;
  width: 8px;
  height: 4px;
  margin-left: -4px;
  border-radius: 2px;
  background: #8a8a8a;
}
.tapp.none::after { display: none; }
.tapp.active::before {
  content: "";
  position: absolute;
  left: 3.500px;
  top: 5px;
  width: 48px;
  height: 48px;
  border-radius: 5px;
  background: #f8f8f8;
  box-shadow: 0 1px 2px rgba(0, 0, 0, 0.14);
}
.tapp.active::after { width: 20px; margin-left: -10px; background: #0078d4; z-index: 1; }
.badge {
  position: absolute;
  left: 33px;
  top: 8px;
  width: 20px;
  height: 20px;
  border-radius: 50%;
  background: #0078d4;
  color: #fff;
  font-size: 14px;
  font-weight: 400;
  line-height: 20px;
  text-align: center;
  z-index: 2;
}
.claude { fill: none; stroke: #d97757; stroke-width: 2.400; stroke-linecap: round; }
.s-letter { font-size: 17px; font-weight: 700; fill: #1a2233; text-anchor: middle; }
.b-letter { font-size: 13px; font-weight: 800; fill: #eee; text-anchor: middle; }
.ahk { font-size: 7px; font-weight: 800; fill: #0b2a55; text-anchor: middle; }

.tray { margin-left: auto; display: flex; align-items: center; height: 100%; padding-bottom: 1px; }
.ti { width: 40px; display: flex; align-items: center; justify-content: center; }
.ti > svg { width: 20px; height: 20px; }
.ti > svg.tray-chev { width: 14px; height: 9px; fill: none; stroke: #222; stroke-width: 1.800; }
.eng { width: 56px; text-align: center; font-size: 15px; }
.sys { flex: none; }
.net { width: 20px; height: 22px; margin-left: 9px; }
.spk { width: 20px; height: 20px; margin-left: 10px; }
.bat { width: 25px; height: 16px; margin-left: 10px; }
.pct { width: 37px; margin-left: 4px; font-size: 15px; white-space: nowrap; }
.clock { width: 98px; display: flex; flex-direction: column; align-items: flex-end; font-size: 15px; line-height: 19px; }
```
